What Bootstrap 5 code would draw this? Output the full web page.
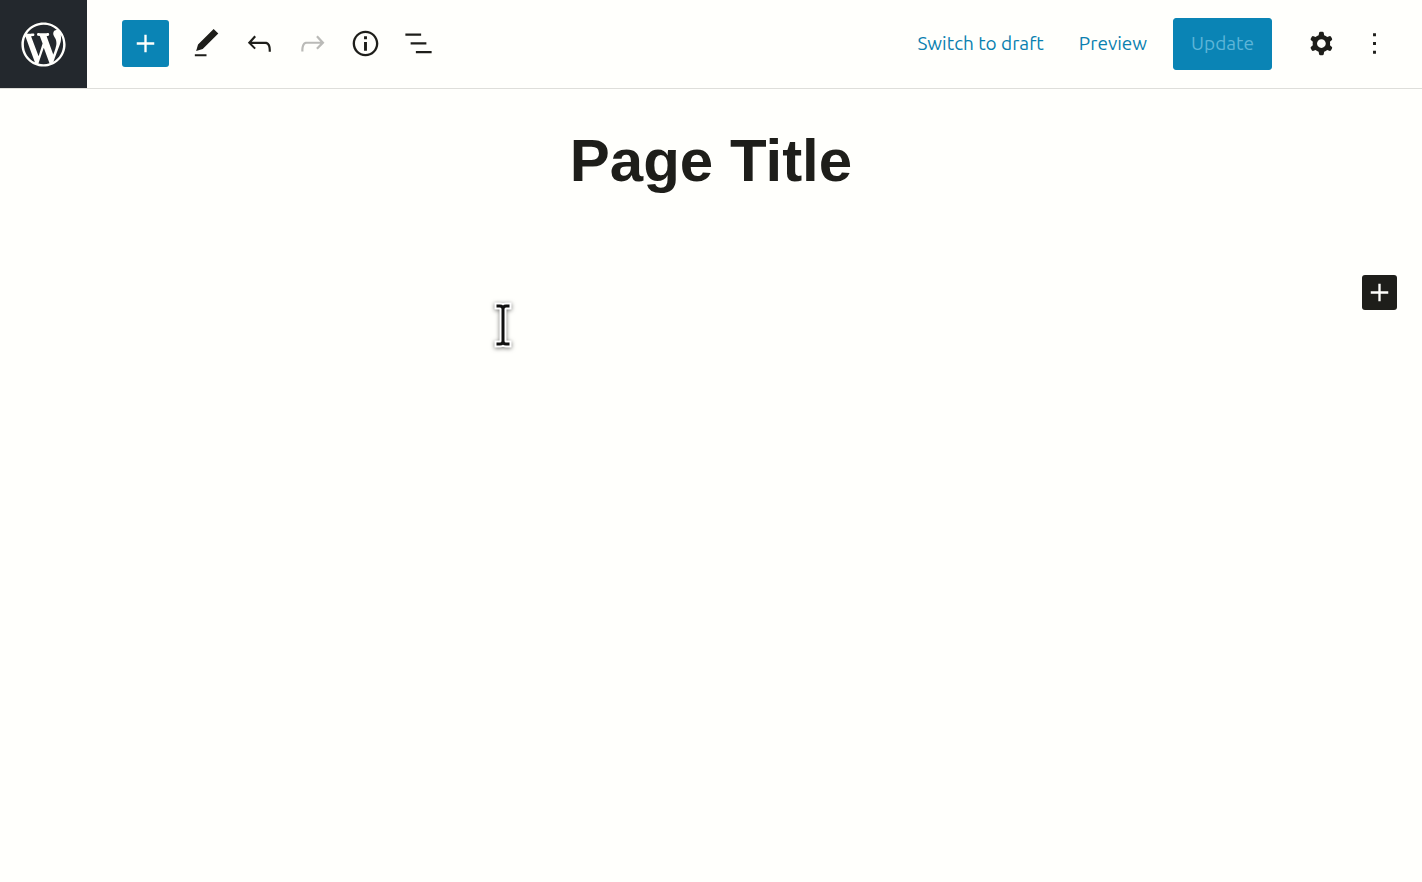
<!DOCTYPE html>
<html lang="en">
<head>
<meta charset="utf-8">
<meta name="viewport" content="width=device-width, initial-scale=1">
<title>Edit Page</title>
<link rel="stylesheet" href="https://cdn.jsdelivr.net/npm/bootstrap@5.3.0/dist/css/bootstrap.min.css">
<style>
  body { background: #fffffc; color: #1e1e1a; font-family: Ubuntu, "Noto Sans", sans-serif; font-size: 19px; }
  .editor-header { height: 89px; border-bottom: 1px solid #dededa; }
  .site-logo { width: 87px; background: #23282d; color: #fffffc; }
  .tool { --bs-btn-padding-x: 6px; --bs-btn-padding-y: 6px; --bs-btn-border-width: 0; --bs-btn-border-radius: 3px;
          --bs-btn-color: #1e1e1a; --bs-btn-disabled-color: #1e1e1a; --bs-btn-disabled-opacity: .3; line-height: 1; }
  .tool svg { display: block; width: 35px; height: 35px; }
  .tool-insert, .tool-insert:hover { background: #0a84b5; color: #fffffc; }
  .tools { padding: 0 0 1px 35px; gap: 6px; }
  .tool-insert { margin-right: 8px; }
  .actions { padding: 0 24px 1px 0; }
  .menu-tools { gap: 6px; }
  .text-action { --bs-btn-color: #0a7fb0; --bs-btn-font-size: 19px; --bs-btn-padding-x: 0; --bs-btn-border-width: 0; }
  .action-links { gap: 35px; margin-right: 26px; }
  .update { width: 99px; height: 52px; margin-right: 26px; --bs-btn-font-size: 19px; --bs-btn-padding-x: 0; --bs-btn-border-radius: 3px;
            --bs-btn-disabled-bg: #0a84b5; --bs-btn-disabled-border-color: #0a84b5; --bs-btn-disabled-color: #5db5d8; --bs-btn-disabled-opacity: 1; }
  .page-title { font: bold 60px/72px "Liberation Sans", Arial, sans-serif; padding-top: 36px; }
  .block-row { padding: 78px 25px 0; }
  .block-add, .block-add:hover { background: #1e1e1a; color: #fffffc; --bs-btn-padding-x: 0; --bs-btn-padding-y: 0; }
  .text-cursor { left: 490px; top: 298px; filter: drop-shadow(0 1px 2px #0008); }
</style>
</head>
<body>
<header class="editor-header d-flex align-items-stretch">
  <a href="#" class="site-logo d-flex align-items-center justify-content-center" aria-label="View pages">
    <svg width="53" height="53" viewBox="-2 -2 24 24" fill="currentColor"><path d="M20 10c0-5.51-4.49-10-10-10C4.48 0 0 4.49 0 10c0 5.52 4.48 10 10 10 5.51 0 10-4.48 10-10zM7.78 15.37L4.37 6.22c.55-.02 1.17-.08 1.17-.08.5-.06.44-1.13-.06-1.11 0 0-1.45.11-2.37.11-.18 0-.37 0-.58-.01C4.12 2.69 6.87 1.11 10 1.11c2.33 0 4.45.87 6.05 2.34-.68-.11-1.65.39-1.65 1.58 0 .74.45 1.36.9 2.1.35.61.55 1.36.55 2.46 0 1.49-1.4 5-1.4 5l-3.03-8.37c.54-.02.82-.17.82-.17.5-.05.44-1.25-.06-1.22 0 0-1.44.12-2.38.12-.87 0-2.33-.12-2.33-.12-.5-.03-.56 1.2-.06 1.22l.92.08 1.26 3.41zM17.41 10c.24-.64.74-1.87.43-4.25.7 1.29 1.05 2.71 1.05 4.25 0 3.29-1.73 6.24-4.4 7.78.97-2.59 1.94-5.2 2.92-7.78zM6.1 18.09C3.12 16.65 1.11 13.53 1.11 10c0-1.3.23-2.48.72-3.59C3.25 10.3 4.67 14.2 6.1 18.09zm4.03-6.63l2.58 6.98c-.86.29-1.76.45-2.71.45-.79 0-1.57-.11-2.29-.33.81-2.38 1.62-4.74 2.42-7.1z"/></svg>
  </a>
  <div class="tools d-flex align-items-center" role="toolbar" aria-label="Document tools">
    <button type="button" class="btn tool tool-insert" aria-label="Add block"><svg viewBox="0 0 24 24" fill="currentColor"><path d="M18 11.2h-5.2V6h-1.6v5.2H6v1.6h5.2V18h1.6v-5.2H18z"/></svg></button>
    <button type="button" class="btn tool" aria-label="Edit"><svg viewBox="0 0 24 24" fill="currentColor"><path d="M20.1 5.1L16.9 2 6.2 12.7l-1.3 4.4 4.5-1.3L20.1 5.1zM4 20.8h8v-1.5H4v1.5z"/></svg></button>
    <button type="button" class="btn tool" aria-label="Undo"><svg viewBox="0 0 24 24" fill="currentColor"><path d="M18.3 11.7c-.6-.6-1.4-.9-2.3-.9H6.7l2.9-3.3-1.1-1-4.5 5L8.5 16l1-1-2.7-2.7H16c.5 0 .9.2 1.3.5 1 1 1 3.4 1 4.5v.3h1.5v-.2c0-1.5 0-4.3-1.5-5.7z"/></svg></button>
    <button type="button" class="btn tool" aria-label="Redo" disabled><svg viewBox="0 0 24 24" fill="currentColor"><path d="M15.6 6.5l-1.1 1 2.9 3.3H8c-.9 0-1.7.3-2.3.9-1.4 1.5-1.4 4.2-1.4 5.6v.2h1.5v-.3c0-1.1 0-3.5 1-4.5.3-.3.7-.5 1.3-.5h9.2L14.5 15l1.1 1.1 4.6-4.6-4.6-5z"/></svg></button>
    <button type="button" class="btn tool" aria-label="Details"><svg viewBox="0 0 24 24" fill="currentColor"><path d="M12 3.2c-4.8 0-8.8 3.9-8.8 8.8 0 4.8 3.9 8.8 8.8 8.8 4.8 0 8.8-3.9 8.8-8.8 0-4.8-4-8.8-8.8-8.8zm0 16c-4 0-7.2-3.3-7.2-7.2C4.8 8 8 4.8 12 4.8s7.2 3.3 7.2 7.2c0 4-3.2 7.2-7.2 7.2zM11 17h2v-6h-2v6zm0-8h2V7h-2v2z"/></svg></button>
    <button type="button" class="btn tool" aria-label="List view"><svg viewBox="0 0 24 24" fill="currentColor"><path d="M13.8 5.2H3v1.5h10.8V5.2zm-3.6 12v1.5H21v-1.5H10.2zm7.2-6H6.6v1.5h10.8v-1.5z"/></svg></button>
  </div>
  <div class="actions d-flex align-items-center ms-auto">
    <div class="action-links d-flex">
      <button type="button" class="btn text-action">Switch to draft</button>
      <button type="button" class="btn text-action">Preview</button>
    </div>
    <button type="button" class="btn btn-primary update" disabled>Update</button>
    <div class="menu-tools d-flex">
      <button type="button" class="btn tool" aria-label="Settings"><svg viewBox="0 0 24 24" fill="currentColor"><path fill-rule="evenodd" d="M10.289 4.836A1 1 0 0111.275 4h1.306a1 1 0 01.987.836l.244 1.466c.787.26 1.503.679 2.108 1.218l1.393-.522a1 1 0 011.216.437l.653 1.13a1 1 0 01-.23 1.273l-1.148.944a6.025 6.025 0 010 2.435l1.149.946a1 1 0 01.23 1.272l-.653 1.13a1 1 0 01-1.216.437l-1.394-.522c-.605.54-1.32.958-2.108 1.218l-.244 1.466a1 1 0 01-.987.836h-1.306a1 1 0 01-.986-.836l-.244-1.466a5.995 5.995 0 01-2.108-1.218l-1.394.522a1 1 0 01-1.217-.436l-.653-1.131a1 1 0 01.23-1.272l1.149-.946a6.026 6.026 0 010-2.435l-1.148-.944a1 1 0 01-.23-1.272l.653-1.131a1 1 0 011.217-.437l1.393.522a5.994 5.994 0 012.108-1.218l.244-1.466zM14.929 12a3 3 0 11-6 0 3 3 0 016 0z"/></svg></button>
      <button type="button" class="btn tool" aria-label="Options"><svg viewBox="0 0 24 24" fill="currentColor"><path d="M13 19h-2v-2h2v2zm0-6h-2v-2h2v2zm0-6h-2V5h2v2z"/></svg></button>
    </div>
  </div>
</header>
<main>
  <h1 class="page-title text-center m-0">Page Title</h1>
  <div class="block-row d-flex justify-content-end">
    <button type="button" class="btn tool block-add" aria-label="Add block"><svg viewBox="0 0 24 24" fill="currentColor"><path d="M18 11.2h-5.2V6h-1.6v5.2H6v1.6h5.2V18h1.6v-5.2H18z"/></svg></button>
  </div>
</main>
<svg class="text-cursor position-absolute pe-none" width="26" height="54" viewBox="0 0 26 54" fill="none" stroke-linecap="square" aria-hidden="true">
  <path d="M8 8h2q3 0 3 3 0-3 3-3h2M13 11v32M8 46h2q3 0 3-3 0 3 3 3h2" stroke="#fff" stroke-width="7"/>
  <path d="M8 8h2q3 0 3 3 0-3 3-3h2M13 11v32M8 46h2q3 0 3-3 0 3 3 3h2" stroke="#111" stroke-width="3"/>
</svg>
<script src="https://cdn.jsdelivr.net/npm/bootstrap@5.3.0/dist/js/bootstrap.bundle.min.js"></script>
</body>
</html>
